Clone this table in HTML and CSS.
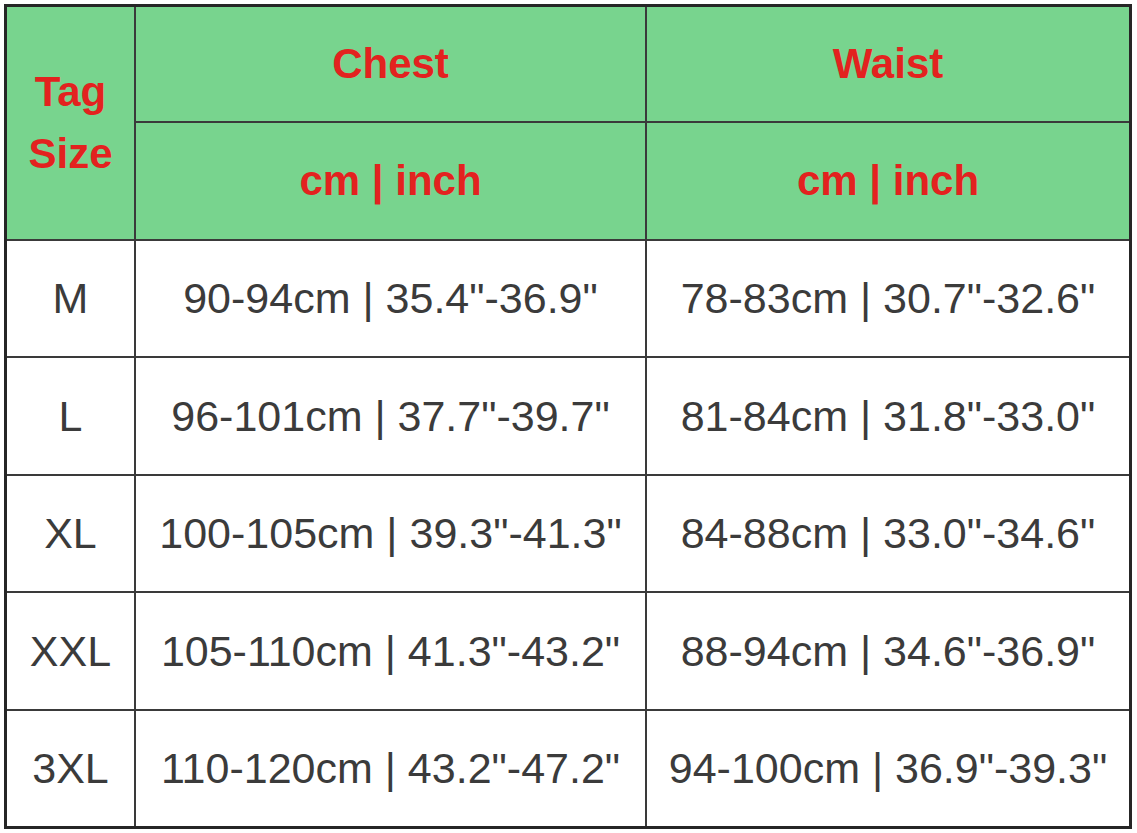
FILE: index.html
```html
<!DOCTYPE html>
<html>
<head>
<meta charset="utf-8">
<link rel="stylesheet" href="styles.css">
</head>
<body>
<div class="page">
  <div class="chart">
    <div class="cell head tag">Tag<br>Size</div>
    <div class="cell head">Chest</div>
    <div class="cell head">Waist</div>
    <div class="cell head">cm | inch</div>
    <div class="cell head">cm | inch</div>

    <div class="cell">M</div>
    <div class="cell">90-94cm | 35.4"-36.9"</div>
    <div class="cell">78-83cm | 30.7"-32.6"</div>

    <div class="cell">L</div>
    <div class="cell">96-101cm | 37.7"-39.7"</div>
    <div class="cell">81-84cm | 31.8"-33.0"</div>

    <div class="cell">XL</div>
    <div class="cell">100-105cm | 39.3"-41.3"</div>
    <div class="cell">84-88cm | 33.0"-34.6"</div>

    <div class="cell">XXL</div>
    <div class="cell">105-110cm | 41.3"-43.2"</div>
    <div class="cell">88-94cm | 34.6"-36.9"</div>

    <div class="cell">3XL</div>
    <div class="cell">110-120cm | 43.2"-47.2"</div>
    <div class="cell">94-100cm | 36.9"-39.3"</div>
  </div>
</div>
</body>
</html>
```

FILE: styles.css
```css
html, body {
  margin: 0;
  padding: 0;
  background: #ffffff;
}

.page {
  padding: 4px 0 0 4px;
  width: 1137px;
  height: 833px;
  box-sizing: border-box;
}

.chart {
  display: grid;
  grid-template-columns: 127px 509px 482px;
  grid-template-rows: 114px 116px 115px 116px 115px 116px 115px;
  gap: 2px;
  background: #3a3a3a;
  border: 3px solid #262626;
  width: max-content;
  font-family: "Liberation Sans", Arial, sans-serif;
}

.cell {
  background: #ffffff;
  display: flex;
  align-items: center;
  justify-content: center;
  text-align: center;
  font-size: 43px;
  color: #3b3b3b;
  white-space: nowrap;
}

.head {
  background: #78d48e;
  color: #e3221f;
  font-weight: bold;
  font-size: 42px;
}

.tag {
  grid-row: 1 / span 2;
  line-height: 62px;
}
```
